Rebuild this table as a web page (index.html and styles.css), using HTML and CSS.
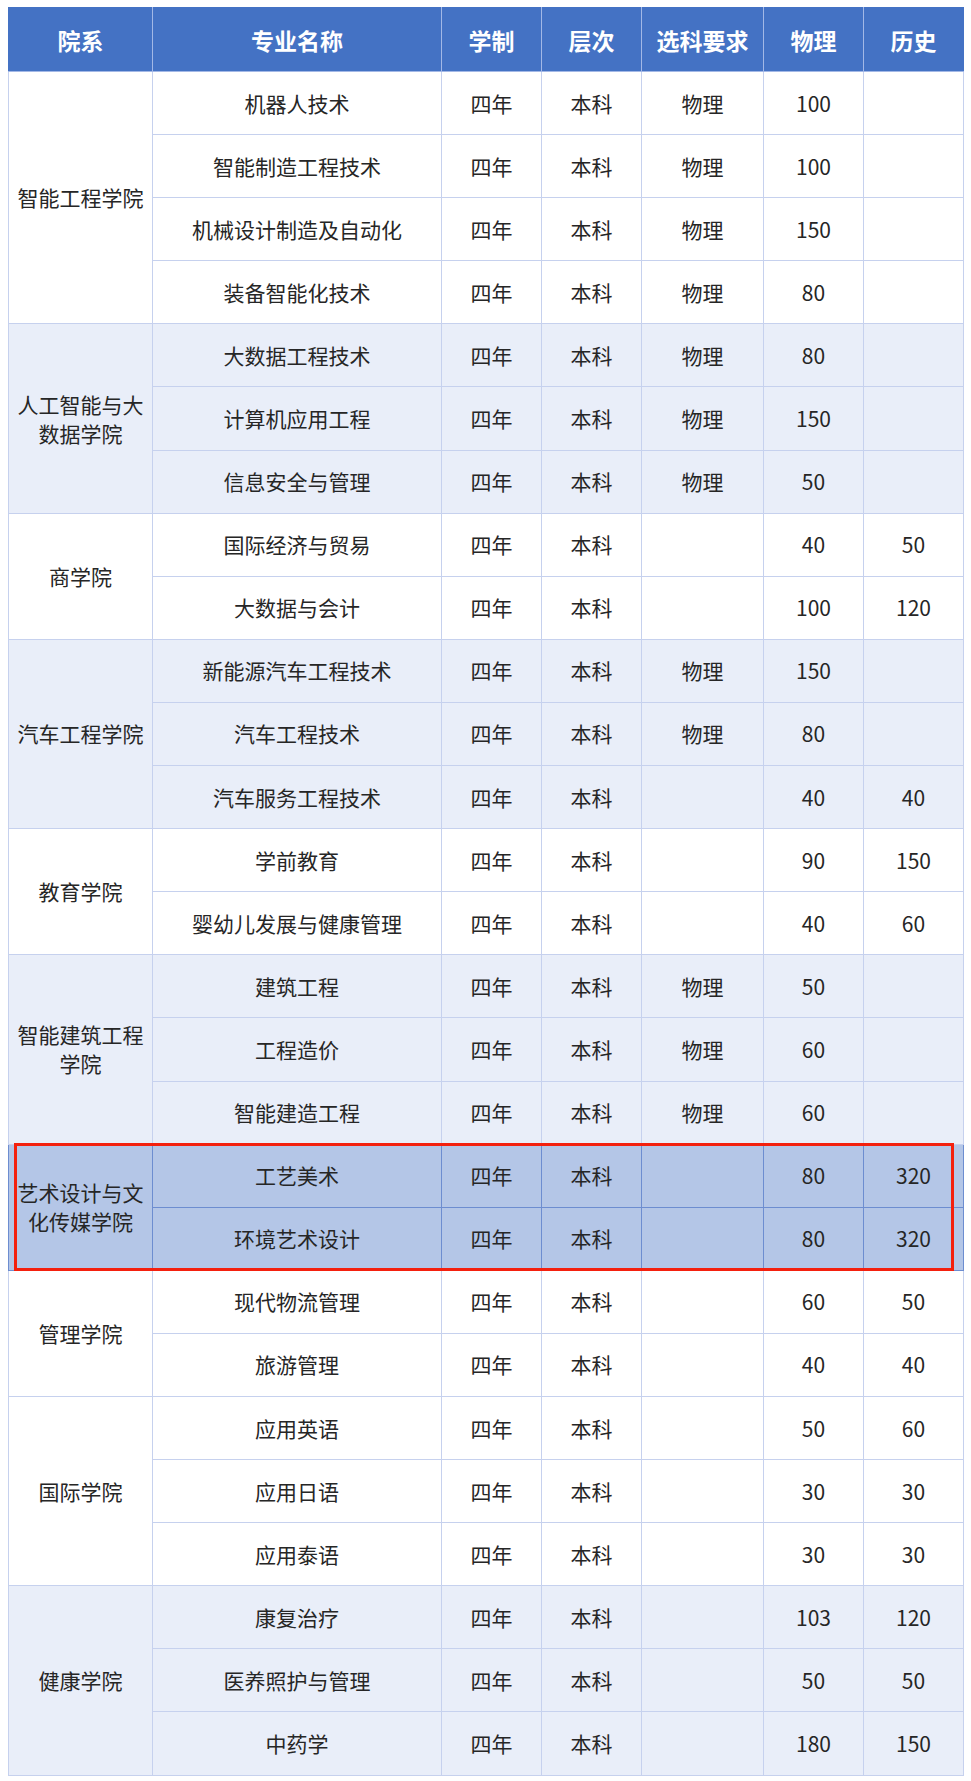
FILE: index.html
```html
<!DOCTYPE html>
<html lang="zh-CN">
<head>
<meta charset="utf-8">
<link rel="stylesheet" href="styles.css">
</head>
<body>
<div class="wrap">
<table class="grid">
<colgroup>
<col class="c1"><col class="c2"><col class="c3"><col class="c4"><col class="c5"><col class="c6"><col class="c7">
</colgroup>
<thead>
<tr><th>院系</th><th>专业名称</th><th>学制</th><th>层次</th><th>选科要求</th><th>物理</th><th>历史</th></tr>
</thead>
<tbody>
<tr class="w"><td rowspan="4" class="dept">智能工程学院</td><td>机器人技术</td><td>四年</td><td>本科</td><td>物理</td><td>100</td><td></td></tr>
<tr class="w"><td>智能制造工程技术</td><td>四年</td><td>本科</td><td>物理</td><td>100</td><td></td></tr>
<tr class="w"><td>机械设计制造及自动化</td><td>四年</td><td>本科</td><td>物理</td><td>150</td><td></td></tr>
<tr class="w"><td>装备智能化技术</td><td>四年</td><td>本科</td><td>物理</td><td>80</td><td></td></tr>

<tr class="b"><td rowspan="3" class="dept">人工智能与大<br>数据学院</td><td>大数据工程技术</td><td>四年</td><td>本科</td><td>物理</td><td>80</td><td></td></tr>
<tr class="b"><td>计算机应用工程</td><td>四年</td><td>本科</td><td>物理</td><td>150</td><td></td></tr>
<tr class="b"><td>信息安全与管理</td><td>四年</td><td>本科</td><td>物理</td><td>50</td><td></td></tr>

<tr class="w"><td rowspan="2" class="dept">商学院</td><td>国际经济与贸易</td><td>四年</td><td>本科</td><td></td><td>40</td><td>50</td></tr>
<tr class="w"><td>大数据与会计</td><td>四年</td><td>本科</td><td></td><td>100</td><td>120</td></tr>

<tr class="b"><td rowspan="3" class="dept">汽车工程学院</td><td>新能源汽车工程技术</td><td>四年</td><td>本科</td><td>物理</td><td>150</td><td></td></tr>
<tr class="b"><td>汽车工程技术</td><td>四年</td><td>本科</td><td>物理</td><td>80</td><td></td></tr>
<tr class="b"><td>汽车服务工程技术</td><td>四年</td><td>本科</td><td></td><td>40</td><td>40</td></tr>

<tr class="w"><td rowspan="2" class="dept">教育学院</td><td>学前教育</td><td>四年</td><td>本科</td><td></td><td>90</td><td>150</td></tr>
<tr class="w"><td>婴幼儿发展与健康管理</td><td>四年</td><td>本科</td><td></td><td>40</td><td>60</td></tr>

<tr class="b"><td rowspan="3" class="dept">智能建筑工程<br>学院</td><td>建筑工程</td><td>四年</td><td>本科</td><td>物理</td><td>50</td><td></td></tr>
<tr class="b"><td>工程造价</td><td>四年</td><td>本科</td><td>物理</td><td>60</td><td></td></tr>
<tr class="b"><td>智能建造工程</td><td>四年</td><td>本科</td><td>物理</td><td>60</td><td></td></tr>

<tr class="h"><td rowspan="2" class="dept">艺术设计与文<br>化传媒学院</td><td>工艺美术</td><td>四年</td><td>本科</td><td></td><td>80</td><td>320</td></tr>
<tr class="h"><td>环境艺术设计</td><td>四年</td><td>本科</td><td></td><td>80</td><td>320</td></tr>

<tr class="w"><td rowspan="2" class="dept">管理学院</td><td>现代物流管理</td><td>四年</td><td>本科</td><td></td><td>60</td><td>50</td></tr>
<tr class="w"><td>旅游管理</td><td>四年</td><td>本科</td><td></td><td>40</td><td>40</td></tr>

<tr class="w"><td rowspan="3" class="dept">国际学院</td><td>应用英语</td><td>四年</td><td>本科</td><td></td><td>50</td><td>60</td></tr>
<tr class="w"><td>应用日语</td><td>四年</td><td>本科</td><td></td><td>30</td><td>30</td></tr>
<tr class="w"><td>应用泰语</td><td>四年</td><td>本科</td><td></td><td>30</td><td>30</td></tr>

<tr class="b"><td rowspan="3" class="dept">健康学院</td><td>康复治疗</td><td>四年</td><td>本科</td><td></td><td>103</td><td>120</td></tr>
<tr class="b"><td>医养照护与管理</td><td>四年</td><td>本科</td><td></td><td>50</td><td>50</td></tr>
<tr class="b"><td>中药学</td><td>四年</td><td>本科</td><td></td><td>180</td><td>150</td></tr>
</tbody>
</table>
<div class="mark"></div>
</div>
</body>
</html>
```

FILE: styles.css
```css
html, body {
  margin: 0;
  padding: 0;
  background: #ffffff;
}

body {
  padding: 7px 8px 0 8px;
  font-family: "Noto Sans CJK SC", "Noto Sans", sans-serif;
  color: #262626;
}

.wrap {
  position: relative;
  width: 955px;
}

.grid {
  border-collapse: collapse;
  table-layout: fixed;
  width: 955px;
}

.c1 { width: 144px; }
.c2 { width: 289px; }
.c3 { width: 100px; }
.c4 { width: 100px; }
.c5 { width: 122px; }
.c6 { width: 100px; }
.c7 { width: 100px; }

.grid thead tr { height: 64px; }
.grid tbody tr { height: 63.1px; }

.grid th {
  padding: 0;
  background: #4472c4;
  color: #ffffff;
  font-size: 23px;
  font-weight: 700;
  line-height: 30px;
  text-align: center;
  vertical-align: middle;
  border: 1px solid #a3b8e6;
  border-top-color: #4472c4;
}

.grid th:first-child { border-left-color: #4472c4; }
.grid th:last-child { border-right-color: #4472c4; }

.grid td {
  padding: 0;
  font-size: 21px;
  line-height: 29px;
  text-align: center;
  vertical-align: middle;
  border: 1px solid #c6d1ee;
}

.grid tr.w td { background: #ffffff; }
.grid tr.b td { background: #e9eef9; }
.grid tr.h td {
  background: #b4c6e7;
  border-color: #6d8dd0;
}

.mark {
  position: absolute;
  left: 6px;
  top: 1136px;
  width: 934px;
  height: 122px;
  border: 3px solid #f4200e;
  pointer-events: none;
}
```
